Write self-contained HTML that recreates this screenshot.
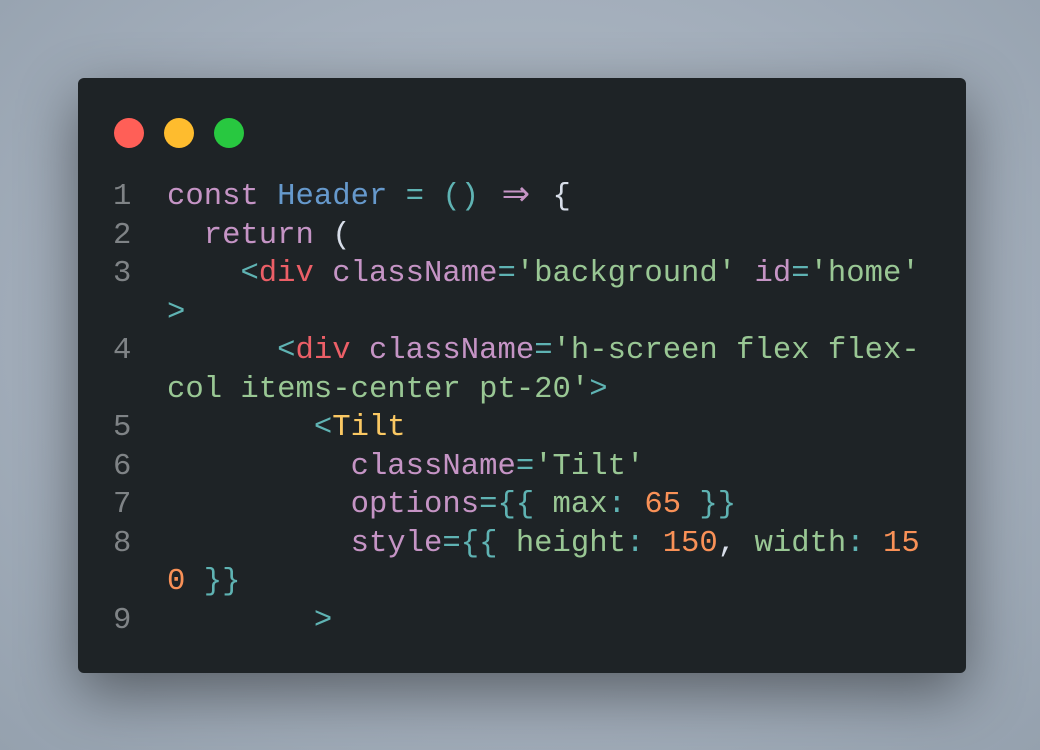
<!DOCTYPE html>
<html><head><style>
html,body{margin:0;padding:0}
body{width:1040px;height:750px;background:radial-gradient(ellipse at 50% 45%,#b4bec8 0%,#a3aebb 60%,#95a1ae 100%);position:relative;overflow:hidden;font-family:"Liberation Mono",monospace}
.card{position:absolute;left:78px;top:78px;width:888px;height:595px;background:#1e2326;border-radius:6px;box-shadow:0 20px 60px rgba(0,0,0,.45)}
.dot{position:absolute;top:118px;width:30px;height:30px;border-radius:50%}
.code{position:absolute;left:113px;top:178px;font-size:30.6px;line-height:38.5px;white-space:pre;color:#d8dee9}
.n{color:#7f8386;display:inline-block;width:54px}
.p{color:#c594c5}.b{color:#6699cc}.t{color:#5fb3b3}.r{color:#ec5f67}.g{color:#99c794}.o{color:#f99157}.y{color:#fac863}
.ar{display:inline-block;width:36.7px;text-align:center;font-family:"DejaVu Sans",sans-serif;font-size:34px;line-height:0;vertical-align:-1px}
</style></head><body>
<div class="card"></div>
<div class="dot" style="left:114px;background:#ff5f57"></div>
<div class="dot" style="left:164px;background:#febc2e"></div>
<div class="dot" style="left:214px;background:#28c840"></div>
<div class="code"><span class="n">1</span><span class="p">const</span> <span class="b">Header</span> <span class="t">=</span> <span class="t">()</span> <span class="p ar">⇒</span> {
<span class="n">2</span>  <span class="p">return</span> (
<span class="n">3</span>    <span class="t">&lt;</span><span class="r">div</span> <span class="p">className</span><span class="t">=</span><span class="g">'background'</span> <span class="p">id</span><span class="t">=</span><span class="g">'home'</span>
<span class="n"></span><span class="t">&gt;</span>
<span class="n">4</span>      <span class="t">&lt;</span><span class="r">div</span> <span class="p">className</span><span class="t">=</span><span class="g">'h-screen flex flex-</span>
<span class="n"></span><span class="g">col items-center pt-20'</span><span class="t">&gt;</span>
<span class="n">5</span>        <span class="t">&lt;</span><span class="y">Tilt</span>
<span class="n">6</span>          <span class="p">className</span><span class="t">=</span><span class="g">'Tilt'</span>
<span class="n">7</span>          <span class="p">options</span><span class="t">={{</span> <span class="g">max</span><span class="t">:</span> <span class="o">65</span> <span class="t">}}</span>
<span class="n">8</span>          <span class="p">style</span><span class="t">={{</span> <span class="g">height</span><span class="t">:</span> <span class="o">150</span>, <span class="g">width</span><span class="t">:</span> <span class="o">15</span>
<span class="n"></span><span class="o">0</span> <span class="t">}}</span>
<span class="n">9</span>        <span class="t">&gt;</span></div>
</body></html>
